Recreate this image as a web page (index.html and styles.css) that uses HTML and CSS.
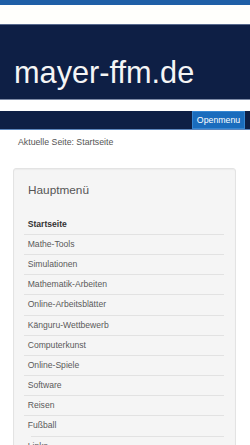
FILE: index.html
```html
<!DOCTYPE html>
<html lang="de">
<head>
  <meta charset="UTF-8" />
  <title>mayer-ffm.de</title>
  <meta name="viewport" content="width=device-width, initial-scale=1.0" />
  <link rel="stylesheet" href="styles.css">
</head>
<body>
  <div class="topbar"></div>
  <div class="strip"></div>
  <header class="brand">
    <h1>mayer-ffm.de</h1>
  </header>

  <nav class="navbar">
    <button class="menu-btn">Openmenu</button>
  </nav>

  <p class="breadcrumb">Aktuelle Seite: Startseite</p>

  <aside class="panel">
    <h3>Hauptmenü</h3>
    <ul class="menu">
      <li class="active">Startseite</li>
      <li>Mathe-Tools</li>
      <li>Simulationen</li>
      <li>Mathematik-Arbeiten</li>
      <li>Online-Arbeitsblätter</li>
      <li>Känguru-Wettbewerb</li>
      <li>Computerkunst</li>
      <li>Online-Spiele</li>
      <li>Software</li>
      <li>Reisen</li>
      <li class="inset">Fußball</li>
      <li>Links</li>
    </ul>
  </aside>
</body>
</html>
```

FILE: styles.css
```css
body {
  margin: 0;
  font-family: 'Liberation Sans', Arial, sans-serif;
  background: #fff;
  color: #555;
  overflow: hidden;
}
.topbar {
  height: 5px;
  background: #1f5fa6;
}
.strip {
  height: 19px;
  background: #fffffc;
  border-bottom: 1px solid #56688c;
}
.brand {
  background: #0e1f45;
  height: 75px;
  box-sizing: border-box;
  padding: 31px 14px 0;
  border-bottom: 1px solid #7d8aa6;
}
.brand h1 {
  margin: 0;
  font-size: 30.7px;
  line-height: 34px;
  font-weight: normal;
  color: #f5f5f5;
}
.navbar {
  margin-top: 11px;
  height: 18px;
  background: #0e1f45;
  border-bottom: 1px solid #5d86bd;
  display: flex;
  justify-content: flex-end;
  padding-right: 5px;
}
.menu-btn {
  height: 18px;
  width: 53px;
  padding: 0;
  border: 1px solid #3586d2;
  background: #1a6cbd;
  color: #fff;
  font-family: 'Liberation Sans', Arial, sans-serif;
  font-size: 8.75px;
}
.breadcrumb {
  margin: 0;
  padding: 6px 18px 0;
  font-size: 8.75px;
  line-height: 12.5px;
  color: #555;
}
.panel {
  margin: 19px 14px 0 13px;
  background: #f5f5f5;
  border: 1px solid #e3e3e3;
  border-radius: 3px;
  box-shadow: inset 0 1px 1px rgba(0, 0, 0, 0.04);
  padding: 14.5px 11px 0 14px;
}
.panel h3 {
  margin: 0;
  font-size: 11.8px;
  line-height: 15px;
  font-weight: normal;
  color: #555;
}
.menu {
  list-style: none;
  margin: 16.6px 0 0 -4px;
  padding: 0;
}
.menu li {
  height: 19.2px;
  line-height: 19.2px;
  padding-left: 3.7px;
  border-bottom: 1px solid #e2e2e2;
  font-size: 8.6px;
  color: #5a5a5a;
}
.menu li.active {
  font-weight: bold;
  color: #333;
}
.menu li.inset {
  border-bottom: none;
  background-image: linear-gradient(#e2e2e2, #e2e2e2);
  background-size: calc(100% - 7px) 1px;
  background-position: 7px 100%;
  background-repeat: no-repeat;
  padding-bottom: 1px;
}
```
